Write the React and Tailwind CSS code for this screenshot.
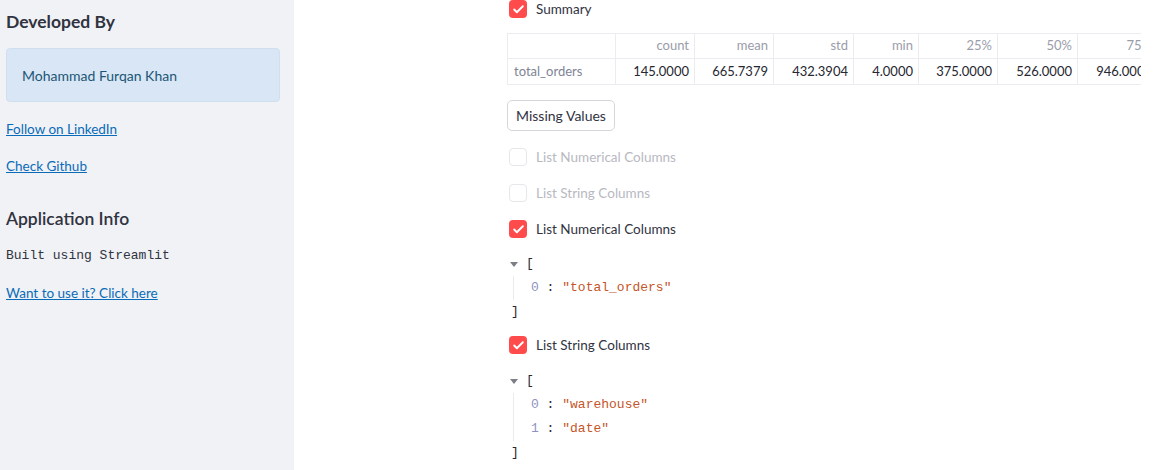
import { Check } from "lucide-react";

const sans = "font-['Source_Sans_Pro','Lato','Noto_Sans',sans-serif]";
const mono = "font-['Liberation_Mono','DejaVu_Sans_Mono',monospace]";

function Checkbox({ label, checked, disabled }) {
  return (
    <div className="flex items-center h-[18px] pl-[2px]">
      {checked ? (
        <div className="w-[18px] h-[18px] rounded-[4px] bg-[#ff4b4b] flex items-center justify-center">
          <Check className="w-[13px] h-[13px] text-white" strokeWidth={3.5} />
        </div>
      ) : (
        <div className="w-[18px] h-[18px] rounded-[4px] border border-[#e6e7ea] bg-white" />
      )}
      <span
        className={`ml-[9px] text-[13.5px] ${
          disabled ? "text-[#b8b9bf]" : "text-[#31333f]"
        }`}
      >
        {label}
      </span>
    </div>
  );
}

function JsonList({ items }) {
  return (
    <div className={`${mono} text-[13px] leading-[24px] text-[#262730]`}>
      <div className="flex items-center">
        <span className="ml-[3px] w-0 h-0 border-l-[4px] border-r-[4px] border-t-[5px] border-l-transparent border-r-transparent border-t-[#7d7f88]" />
        <span className="ml-[8px]">[</span>
      </div>
      <div className="ml-[6px] border-l border-[#ebebeb] pl-[17px]">
        {items.map((item, i) => (
          <div key={i}>
            <span className="text-[#8f93c2]">{i}</span>
            <span className="text-[#262730]"> : </span>
            <span className="text-[#c4552a]">"{item}"</span>
          </div>
        ))}
      </div>
      <div className="ml-[4px]">]</div>
    </div>
  );
}

function SummaryTable() {
  const cols = [
    { name: "count", value: "145.0000", w: "w-[79px]" },
    { name: "mean", value: "665.7379", w: "w-[79px]" },
    { name: "std", value: "432.3904", w: "w-[80px]" },
    { name: "min", value: "4.0000", w: "w-[65px]" },
    { name: "25%", value: "375.0000", w: "w-[79px]" },
    { name: "50%", value: "526.0000", w: "w-[80px]" },
    { name: "75%", value: "946.0000", w: "w-[80px]" },
  ];
  return (
    <div className="w-[634px] overflow-hidden">
      <div className="flex w-max text-[13px]">
        <div className="w-[108px] shrink-0 border-l border-[#ebecef]">
          <div className="h-[26px] border-t border-b border-[#ebecef]" />
          <div className="h-[26px] border-b border-[#ebecef] flex items-center px-[6px] text-[#808495]">
            total_orders
          </div>
        </div>
        {cols.map((c) => (
          <div key={c.name} className={`${c.w} shrink-0 border-l border-[#ebecef]`}>
            <div className="h-[26px] border-t border-b border-[#ebecef] flex items-center justify-end pr-[5px] text-[#9a9caa]">
              {c.name}
            </div>
            <div className="h-[26px] border-b border-[#ebecef] flex items-center justify-end pr-[5px] text-[#262730]">
              {c.value}
            </div>
          </div>
        ))}
      </div>
    </div>
  );
}

export default function App() {
  return (
    <div className={`${sans} flex h-[470px] w-[1164px] overflow-hidden bg-white`}>
      <aside className="w-[294px] shrink-0 bg-[#f0f2f6] pl-[6px] pr-[14px] pt-[10px]">
        <h2 className="text-[17.5px] font-bold text-[#31333f] leading-[24px]">Developed By</h2>
        <div className="mt-[14px] h-[54px] rounded-[4px] bg-[#d8e6f5] border border-[#d0dff0] flex items-center px-[15px] text-[14px] text-[#1b5676]">
          Mohammad Furqan Khan
        </div>
        <a className="block mt-[18px] text-[13.5px] text-[#0a6bb8] underline leading-[18px]" href="#">
          Follow on LinkedIn
        </a>
        <a className="block mt-[19px] text-[13.5px] text-[#0a6bb8] underline leading-[18px]" href="#">
          Check Github
        </a>
        <h2 className="mt-[32px] text-[17.5px] font-semibold text-[#31333f] leading-[24px]">
          Application Info
        </h2>
        <div className={`${mono} mt-[16px] text-[13px] text-[#31333f] leading-[18px]`}>
          Built using Streamlit
        </div>
        <a className="block mt-[19px] text-[13.5px] text-[#0a6bb8] underline leading-[18px]" href="#">
          Want to use it? Click here
        </a>
      </aside>
      <main className="flex-1 pl-[213px]">
        <div className="flex flex-col">
          <Checkbox label="Summary" checked />
          <div className="mt-[15px]">
            <SummaryTable />
          </div>
          <div className="mt-[15px]">
            <button className="h-[31px] w-[108px] rounded-[5px] border border-[#d5d6da] bg-white text-[14px] text-[#31333f]">
              Missing Values
            </button>
          </div>
          <div className="mt-[17px]">
            <Checkbox label="List Numerical Columns" disabled />
          </div>
          <div className="mt-[18px]">
            <Checkbox label="List String Columns" disabled />
          </div>
          <div className="mt-[18px]">
            <Checkbox label="List Numerical Columns" checked />
          </div>
          <div className="mt-[14px]">
            <JsonList items={["total_orders"]} />
          </div>
          <div className="mt-[12px]">
            <Checkbox label="List String Columns" checked />
          </div>
          <div className="mt-[15px]">
            <JsonList items={["warehouse", "date"]} />
          </div>
        </div>
      </main>
    </div>
  );
}
